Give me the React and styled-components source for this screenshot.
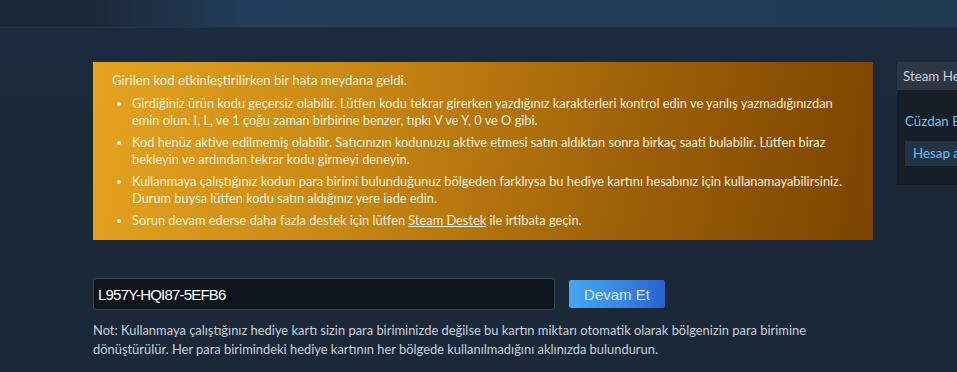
import React from 'react';
import styled, { createGlobalStyle } from 'styled-components';

const GlobalStyle = createGlobalStyle`
    html, body {
        margin: 0;
        padding: 0;
        background: #1b2838;
        overflow: hidden;
    }
    body {
        font-family: Lato, "Noto Sans", Arial, sans-serif;
    }
`

// lines are split where the store page breaks them
const bullets = [
    ['Girdiğiniz ürün kodu geçersiz olabilir. Lütfen kodu tekrar girerken yazdığınız karakterleri kontrol edin ve yanlış yazmadığınızdan', 'emin olun. I, L, ve 1 çoğu zaman birbirine benzer, tıpkı V ve Y, 0 ve O gibi.'],
    ['Kod henüz aktive edilmemiş olabilir. Satıcınızın kodunuzu aktive etmesi satın aldıktan sonra birkaç saati bulabilir. Lütfen biraz', 'bekleyin ve ardından tekrar kodu girmeyi deneyin.'],
    ['Kullanmaya çalıştığınız kodun para birimi bulunduğunuz bölgeden farklıysa bu hediye kartını hesabınız için kullanamayabilirsiniz.', 'Durum buysa lütfen kodu satın aldığınız yere iade edin.'],
];

const Lines = ({ lines }) => lines.map((l, i) => (
    <React.Fragment key={i}>{i > 0 && <br />}{l}</React.Fragment>
));

const App = () => {
    return (
        <>
            <GlobalStyle />
            <Page>
                <TopBand />
                <Content>
                    <MainColumn>
                        <ErrorBox>
                            <ErrorTitle>Girilen kod etkinleştirilirken bir hata meydana geldi.</ErrorTitle>
                            <ErrorList>
                                {bullets.map(b => <li key={b[0]}><Lines lines={b} /></li>)}
                                <li>Sorun devam ederse daha fazla destek için lütfen <a href="#">Steam Destek</a> ile irtibata geçin.</li>
                            </ErrorList>
                        </ErrorBox>
                        <CodeRow>
                            <CodeInput defaultValue="L957Y-HQI87-5EFB6" />
                            <ContinueButton>Devam Et</ContinueButton>
                        </CodeRow>
                        <Note>
                            <Lines lines={[
                                'Not: Kullanmaya çalıştığınız hediye kartı sizin para biriminizde değilse bu kartın miktarı otomatik olarak bölgenizin para birimine',
                                'dönüştürülür. Her para birimindeki hediye kartının her bölgede kullanılmadığını aklınızda bulundurun.',
                            ]} />
                        </Note>
                    </MainColumn>
                    <SidePanel>
                        <SideHeader>Steam Hesabınız</SideHeader>
                        <SideBody>
                            <SideLink>Cüzdan Bakiyesi</SideLink>
                            <SideButton>Hesap ayrıntılarını görüntüle</SideButton>
                        </SideBody>
                    </SidePanel>
                </Content>
            </Page>
        </>
    );
};

export default App;

const Page = styled.div`
    width: 957px;
    height: 372px;
    overflow: hidden;
    background: linear-gradient(180deg, #1c2a3f 27px, #1b2838 120px);
`

const TopBand = styled.div`
    height: 27px;
    background: linear-gradient(90deg, #1b2838 90px, #1f3148 160px, #213b58 240px, #213b57 600px, #203953 100%);
    border-bottom: 1px solid #1e334c;
`

const Content = styled.div`
    display: flex;
    gap: 24px;
    padding: 34px 0 0 93px;
`

const MainColumn = styled.div`
    flex: 0 0 780px;
    display: flex;
    flex-direction: column;
`

const ErrorBox = styled.div`
    background: linear-gradient(100deg, #e5a41f 0%, #c78613 35%, #9c5e07 70%, #7a4400 100%);
    color: #f4eedd;
    font-size: 12.8px;
    line-height: 17px;
    padding: 10px 6px 11px 19px;
    white-space: nowrap;
`

const ErrorTitle = styled.div`
    font-size: 13.2px;
    margin-bottom: 6px;
`

const ErrorList = styled.ul`
    margin: 0;
    padding-left: 20px;
    li {
        margin-bottom: 5px;
        &:last-child {
            margin-bottom: 0;
        }
    }
    a {
        color: #f4eedd;
        text-decoration: underline;
    }
`

const CodeRow = styled.div`
    display: flex;
    align-items: center;
    gap: 14px;
    margin-top: 38px;
`

const CodeInput = styled.input`
    box-sizing: border-box;
    width: 462px;
    height: 32px;
    background: #0f151c;
    border: 1px solid #3a4452;
    border-radius: 3px;
    color: #ffffff;
    font-family: "Liberation Sans", Arial, sans-serif;
    font-size: 15px;
    letter-spacing: -0.8px;
    padding: 0 4px;
    outline: none;
`

const ContinueButton = styled.button`
    width: 96px;
    height: 28px;
    border: none;
    border-radius: 2px;
    background: linear-gradient(90deg, #47a6ef 0%, #3a88e0 55%, #2a5fce 100%);
    color: #d2e7f8;
    font-family: "Liberation Sans", Arial, sans-serif;
    font-size: 15px;
    cursor: pointer;
`

const Note = styled.div`
    margin-top: 11px;
    color: #c6d1dc;
    font-size: 12.9px;
    line-height: 19px;
    white-space: nowrap;
`

const SidePanel = styled.div`
    flex: 0 0 250px;
    align-self: flex-start;
    background: #171e28;
    height: 123px;
`

const SideHeader = styled.div`
    height: 28px;
    line-height: 28px;
    background: #2d3642;
    color: #c6d4df;
    font-size: 13.35px;
    padding-left: 6px;
`

const SideBody = styled.div`
    padding: 22px 8px 0;
    display: flex;
    flex-direction: column;
    align-items: flex-start;
`

const SideLink = styled.div`
    color: #67c1f5;
    font-size: 13.35px;
    line-height: 18px;
`

const SideButton = styled.div`
    margin-top: 11px;
    background: #213447;
    color: #67c1f5;
    font-size: 13.35px;
    line-height: 25px;
    padding: 0 8px;
    white-space: nowrap;
`
